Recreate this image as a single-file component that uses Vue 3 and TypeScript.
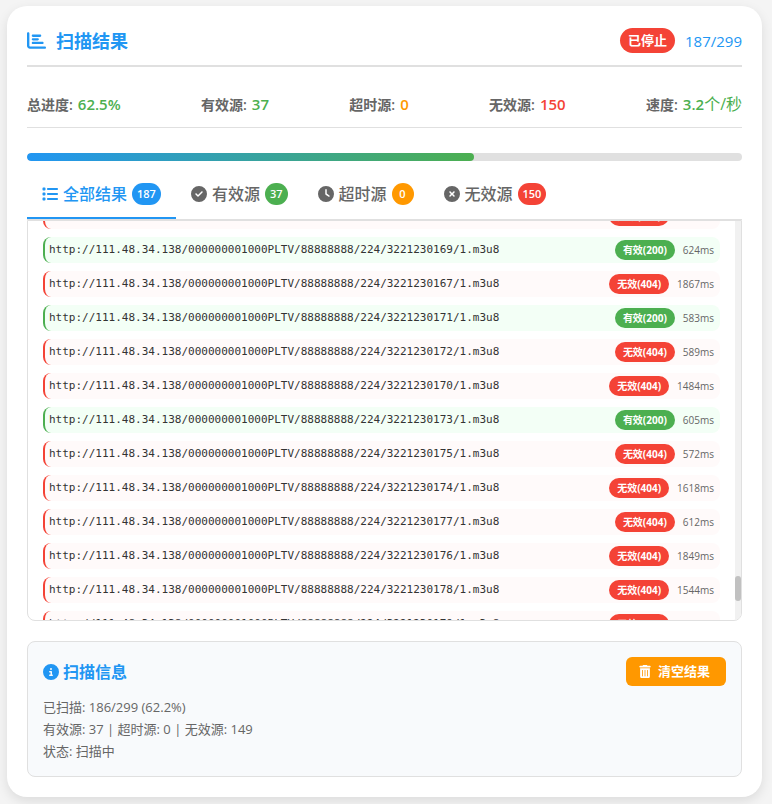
<script setup lang="ts">
import { onMounted, ref } from 'vue'

type Kind = 'all' | 'valid' | 'timeout' | 'invalid'

interface Stat {
  label: string
  value: string
  unit?: string
  tone: string
}

interface Tab {
  key: Kind
  label: string
  count: number
  icon: string
}

interface Result {
  url: string
  ok: boolean
  time: number
}

const icons = {
  chart:
    'M32 32c17.7 0 32 14.3 32 32V400c0 8.8 7.2 16 16 16H480c17.7 0 32 14.3 32 32s-14.3 32-32 32H80c-44.2 0-80-35.8-80-80V64C0 46.3 14.3 32 32 32zm96 96c0-17.7 14.3-32 32-32l192 0c17.7 0 32 14.3 32 32s-14.3 32-32 32l-192 0c-17.7 0-32-14.3-32-32zm32 64H288c17.7 0 32 14.3 32 32s-14.3 32-32 32H160c-17.7 0-32-14.3-32-32s14.3-32 32-32zm0 96H416c17.7 0 32 14.3 32 32s-14.3 32-32 32H160c-17.7 0-32-14.3-32-32s14.3-32 32-32z',
  list:
    'M40 48C26.7 48 16 58.7 16 72v48c0 13.3 10.7 24 24 24H88c13.3 0 24-10.7 24-24V72c0-13.3-10.7-24-24-24H40zM192 64c-17.7 0-32 14.3-32 32s14.3 32 32 32H480c17.7 0 32-14.3 32-32s-14.3-32-32-32H192zm0 160c-17.7 0-32 14.3-32 32s14.3 32 32 32H480c17.7 0 32-14.3 32-32s-14.3-32-32-32H192zm0 160c-17.7 0-32 14.3-32 32s14.3 32 32 32H480c17.7 0 32-14.3 32-32s-14.3-32-32-32H192zM16 232v48c0 13.3 10.7 24 24 24H88c13.3 0 24-10.7 24-24V232c0-13.3-10.7-24-24-24H40c-13.3 0-24 10.7-24 24zM40 368c-13.3 0-24 10.7-24 24v48c0 13.3 10.7 24 24 24H88c13.3 0 24-10.7 24-24V392c0-13.3-10.7-24-24-24H40z',
  check:
    'M256 512A256 256 0 1 0 256 0a256 256 0 1 0 0 512zM369 209L241 337c-9.4 9.4-24.6 9.4-33.9 0l-64-64c-9.4-9.4-9.4-24.6 0-33.9s24.6-9.4 33.9 0l47 47L335 175c9.4-9.4 24.6-9.4 33.9 0s9.4 24.6 0 33.9z',
  clock:
    'M256 0a256 256 0 1 1 0 512A256 256 0 1 1 256 0zM232 120V256c0 8 4 15.5 10.7 20l96 64c11 7.4 25.9 4.4 33.3-6.7s4.4-25.9-6.7-33.3L280 243.2V120c0-13.3-10.7-24-24-24s-24 10.7-24 24z',
  cross:
    'M256 512A256 256 0 1 0 256 0a256 256 0 1 0 0 512zM175 175c9.4-9.4 24.6-9.4 33.9 0l47 47 47-47c9.4-9.4 24.6-9.4 33.9 0s9.4 24.6 0 33.9l-47 47 47 47c9.4 9.4 9.4 24.6 0 33.9s-24.6 9.4-33.9 0l-47-47-47 47c-9.4 9.4-24.6 9.4-33.9 0s-9.4-24.6 0-33.9l47-47-47-47c-9.4-9.4-9.4-24.6 0-33.9z',
  info:
    'M256 512A256 256 0 1 0 256 0a256 256 0 1 0 0 512zM216 336h24V272H216c-13.3 0-24-10.7-24-24s10.7-24 24-24h48c13.3 0 24 10.7 24 24v88h8c13.3 0 24 10.7 24 24s-10.7 24-24 24H216c-13.3 0-24-10.7-24-24s10.7-24 24-24zm40-208a32 32 0 1 1 0 64 32 32 0 1 1 0-64z',
  trash:
    'M135.2 17.7C140.6 6.8 151.7 0 163.8 0H284.2c12.1 0 23.2 6.8 28.6 17.7L320 32h96c17.7 0 32 14.3 32 32s-14.3 32-32 32H32C14.3 96 0 81.7 0 64S14.3 32 32 32h96l7.2-14.3zM32 128H416V448c0 35.3-28.7 64-64 64H96c-35.3 0-64-28.7-64-64V128zm96 64c-8.8 0-16 7.2-16 16V432c0 8.8 7.2 16 16 16s16-7.2 16-16V208c0-8.8-7.2-16-16-16zm96 0c-8.8 0-16 7.2-16 16V432c0 8.8 7.2 16 16 16s16-7.2 16-16V208c0-8.8-7.2-16-16-16zm96 0c-8.8 0-16 7.2-16 16V432c0 8.8 7.2 16 16 16s16-7.2 16-16V208c0-8.8-7.2-16-16-16z',
}

const progress = 62.5

const stats: Stat[] = [
  { label: '总进度:', value: '62.5%', tone: 'green' },
  { label: '有效源:', value: '37', tone: 'green' },
  { label: '超时源:', value: '0', tone: 'orange' },
  { label: '无效源:', value: '150', tone: 'red' },
  { label: '速度:', value: '3.2', unit: '个/秒', tone: 'green' },
]

const tabs: Tab[] = [
  { key: 'all', label: '全部结果', count: 187, icon: icons.list },
  { key: 'valid', label: '有效源', count: 37, icon: icons.check },
  { key: 'timeout', label: '超时源', count: 0, icon: icons.clock },
  { key: 'invalid', label: '无效源', count: 150, icon: icons.cross },
]

const active = ref<Kind>('all')

const entries: [number, boolean, number][] = [
  [168, false, 1602],
  [169, true, 624],
  [167, false, 1867],
  [171, true, 583],
  [172, false, 589],
  [170, false, 1484],
  [173, true, 605],
  [175, false, 572],
  [174, false, 1618],
  [177, false, 612],
  [176, false, 1849],
  [178, false, 1544],
  [179, false, 1571],
]

const results: Result[] = entries.map(([id, ok, time]) => ({
  url: `http://111.48.34.138/000000001000PLTV/88888888/224/3221230${id}/1.m3u8`,
  ok,
  time,
}))

const thumb = { top: '89%', height: '25px' }
const viewport = ref<HTMLElement | null>(null)

onMounted(() => {
  if (viewport.value) viewport.value.scrollTop = 33
})
</script>

<template>
  <main class="card">
    <header class="head">
      <h1 class="title">
        <svg class="icon-title" viewBox="0 0 512 512" aria-hidden="true"><path :d="icons.chart" /></svg>
        扫描结果
      </h1>
      <div class="state">
        <span class="pill">已停止</span>
        <span class="count">187/299</span>
      </div>
    </header>

    <section class="stats">
      <div v-for="s in stats" :key="s.label" class="stat">
        <span>{{ s.label }}</span>
        <span class="value" :class="s.tone">{{ s.value }}<span v-if="s.unit" class="unit">{{ s.unit }}</span></span>
      </div>
    </section>

    <div class="bar" role="progressbar" :aria-valuenow="progress">
      <div class="fill" :style="{ width: progress + '%' }"></div>
    </div>

    <nav class="tabs">
      <button
        v-for="t in tabs"
        :key="t.key"
        type="button"
        class="tab"
        :class="{ active: active === t.key }"
        @click="active = t.key"
      >
        <svg class="icon" viewBox="0 0 512 512" aria-hidden="true"><path :d="t.icon" /></svg>
        <span>{{ t.label }}</span>
        <span class="badge" :class="t.key">{{ t.count }}</span>
      </button>
    </nav>

    <section class="panel">
      <div ref="viewport" class="viewport">
        <ul class="rows">
          <li v-for="r in results" :key="r.url" class="row" :class="r.ok ? 'ok' : 'bad'">
            <span class="url">{{ r.url }}</span>
            <span class="tag">{{ r.ok ? '有效(200)' : '无效(404)' }}</span>
            <span class="time">{{ r.time }}ms</span>
          </li>
        </ul>
      </div>
      <div class="track">
        <div class="thumb" :style="thumb"></div>
      </div>
    </section>

    <section class="info">
      <div class="info-head">
        <h2 class="subtitle">
          <svg class="icon" viewBox="0 0 512 512" aria-hidden="true"><path :d="icons.info" /></svg>
          扫描信息
        </h2>
        <button type="button" class="clear">
          <svg class="icon-trash" viewBox="0 0 448 512" aria-hidden="true"><path :d="icons.trash" /></svg>
          清空结果
        </button>
      </div>
      <p class="line">已扫描: 186/299 (62.2%)</p>
      <p class="line">有效源: 37 | 超时源: 0 | 无效源: 149</p>
      <p class="line">状态: 扫描中</p>
    </section>
  </main>
</template>

<style>
body {
  background: #f4f4f4;
}
</style>

<style scoped>
.card {
  box-sizing: border-box;
  margin: 6px 10px 7px 7px;
  padding: 20px;
  border-radius: 20px;
  background: #fff;
  box-shadow: 0 4px 12px rgba(0, 0, 0, 0.1);
  color: #666;
  font-family: 'Open Sans', 'Noto Sans CJK SC', sans-serif;
}

svg {
  flex: none;
  fill: currentColor;
}

.head {
  display: flex;
  align-items: center;
  justify-content: space-between;
  height: 29px;
  padding-bottom: 10px;
  border-bottom: 2px solid #e0e0e0;
}

.title {
  display: flex;
  align-items: center;
  gap: 10px;
  margin: 0;
  color: #2196f3;
  font-size: 18px;
  font-weight: 600;
  line-height: 28px;
}

.icon-title {
  width: 19px;
  height: 19px;
}

.state {
  display: flex;
  align-items: center;
  gap: 10px;
}

.pill {
  padding: 0 8px;
  border-radius: 13px;
  background: #f44336;
  color: #fff;
  font-size: 13px;
  font-weight: 600;
  line-height: 25px;
}

.count {
  color: #2196f3;
  font-size: 15px;
  line-height: 24px;
}

.stats {
  display: flex;
  justify-content: space-between;
  margin-top: 15px;
  border-bottom: 1px solid #e0e0e0;
  line-height: 45px;
}

.stat {
  display: flex;
  gap: 5px;
  font-size: 14px;
  font-weight: 600;
}

.value {
  font-size: 15px;
}

.unit {
  font-size: 16px;
  font-weight: 400;
}

.green {
  color: #4caf50;
}

.orange {
  color: #ff9800;
}

.red {
  color: #f44336;
}

.bar {
  height: 8px;
  margin-top: 25px;
  overflow: hidden;
  border-radius: 4px;
  background: #e0e0e0;
}

.fill {
  height: 100%;
  border-radius: 4px;
  background: linear-gradient(90deg, #2196f3, #4caf50);
}

.tabs {
  display: flex;
  margin-top: 10px;
  border-bottom: 1px solid #e0e0e0;
}

.tab {
  display: flex;
  align-items: center;
  gap: 5px;
  padding: 12px 15px;
  border: 0;
  border-bottom: 2px solid transparent;
  background: none;
  color: #666;
  font: inherit;
  font-size: 16px;
  font-weight: 500;
  line-height: 22px;
  cursor: pointer;
}

.tab.active {
  border-bottom-color: #2196f3;
  color: #2196f3;
}

.icon {
  width: 16px;
  height: 16px;
}

.badge {
  box-sizing: border-box;
  min-width: 22px;
  padding: 0 5px;
  border-radius: 11px;
  color: #fff;
  font-size: 11px;
  font-weight: 600;
  text-align: center;
}

.badge.all {
  background: #2196f3;
}

.badge.valid {
  background: #4caf50;
}

.badge.timeout {
  background: #ff9800;
}

.badge.invalid {
  background: #f44336;
}

.panel {
  display: flex;
  height: 399px;
  overflow: hidden;
  border: 1px solid #e0e0e0;
  border-radius: 0 0 8px 8px;
}

.viewport {
  flex: 1;
  overflow: hidden;
}

.rows {
  display: flex;
  flex-direction: column;
  gap: 8px;
  margin: 0;
  padding: 15px;
  list-style: none;
}

.row {
  display: flex;
  align-items: center;
  gap: 8px;
  padding: 3px 6px 3px 4px;
  border-left: 2px solid;
  border-radius: 8px;
}

.row.ok {
  border-color: #4caf50;
  background: #f3fff6;
}

.row.bad {
  border-color: #f44336;
  background: #fffafa;
}

.url {
  flex: 1;
  color: #333;
  font-family: 'DejaVu Sans Mono', monospace;
  font-size: 11px;
  line-height: 18px;
}

.tag {
  padding: 0 8px;
  border-radius: 10px;
  color: #fff;
  font-size: 10px;
  font-weight: 700;
  line-height: 20px;
}

.ok .tag {
  background: #4caf50;
}

.bad .tag {
  background: #f44336;
}

.time {
  font-size: 10px;
  line-height: 18px;
}

.track {
  width: 6px;
  background: #f1f1f1;
}

.thumb {
  position: relative;
  border-radius: 3px;
  background: #c1c1c1;
}

.info {
  margin-top: 20px;
  padding: 15px 15px 14px;
  border: 1px solid #e0e0e0;
  border-radius: 8px;
  background: #f8fafc;
}

.info-head {
  display: flex;
  align-items: center;
  justify-content: space-between;
  margin-bottom: 10px;
}

.subtitle {
  display: flex;
  align-items: center;
  gap: 4px;
  margin: 0;
  color: #2196f3;
  font-size: 16px;
  font-weight: 600;
  line-height: 24px;
}

.clear {
  display: flex;
  align-items: center;
  gap: 7px;
  padding: 0 16px 0 13px;
  border: 0;
  border-radius: 6px;
  background: #ff9800;
  color: #fff;
  font: inherit;
  font-size: 13px;
  font-weight: 600;
  line-height: 29px;
  cursor: pointer;
}

.icon-trash {
  width: 12px;
  height: 13px;
}

.line {
  margin: 0;
  font-size: 13px;
  line-height: 22px;
}
</style>
